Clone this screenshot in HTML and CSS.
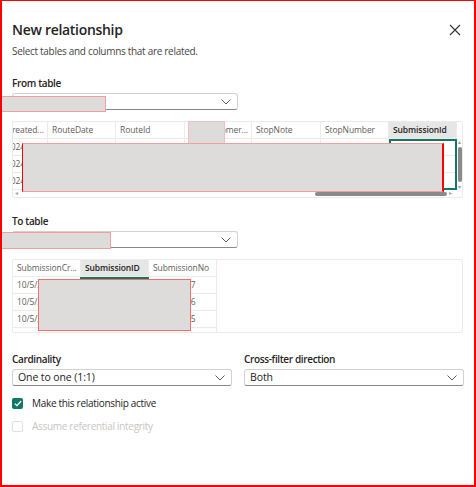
FILE: index.html
```html
<!DOCTYPE html>
<html>
<head>
<meta charset="utf-8">
<link rel="stylesheet" href="styles.css">
</head>
<body>
<div class="frame">
  <header class="head">
    <h1 class="title">New relationship</h1>
    <button class="close" aria-label="Close">
      <svg width="12" height="12" viewBox="0 0 12 12"><path d="M1 1L11 11M11 1L1 11" stroke="#323130" stroke-width="1.1" fill="none"/></svg>
    </button>
  </header>
  <p class="subtitle">Select tables and columns that are related.</p>

  <section class="block">
    <div class="label">From table</div>
    <div class="select half">
      <span class="value"></span>
      <svg class="chev" width="10" height="6" viewBox="0 0 10 6"><path d="M0.5 0.5L5 5L9.5 0.5" stroke="#605e5c" fill="none"/></svg>
      <div class="redact r-from-select"></div>
    </div>
    <div class="grid from-grid">
      <div class="grid-main">
        <div class="row head-row">
          <div class="cell c35 first">reated...</div>
          <div class="cell c68">RouteDate</div>
          <div class="cell c69">RouteId</div>
          <div class="cell c67 right">Customer...</div>
          <div class="cell c69">StopNote</div>
          <div class="cell c68">StopNumber</div>
          <div class="cell c68 sel-head">SubmissionId</div>
        </div>
        <div class="body">
          <div class="row"><div class="cell c35 first date">2024</div><div class="cell c68"></div><div class="cell c69"></div><div class="cell c67"></div><div class="cell c69"></div><div class="cell c68"></div><div class="cell c68"></div></div>
          <div class="row"><div class="cell c35 first date">2024</div><div class="cell c68"></div><div class="cell c69"></div><div class="cell c67"></div><div class="cell c69"></div><div class="cell c68"></div><div class="cell c68"></div></div>
          <div class="row"><div class="cell c35 first date">2024</div><div class="cell c68"></div><div class="cell c69"></div><div class="cell c67"></div><div class="cell c69"></div><div class="cell c68"></div><div class="cell c68"></div></div>
          <div class="sel-col from-sel"></div>
        </div>
        <div class="hscroll">
          <span class="arr">&#9666;</span>
          <div class="hthumb"></div>
          <span class="arr">&#9656;</span>
        </div>
      </div>
      <div class="vscroll">
        <span class="varr">&#9652;</span>
        <div class="vthumb"></div>
        <span class="varr">&#9662;</span>
      </div>
      <div class="redact r-from-head"></div>
      <div class="redact r-from-body"></div>
    </div>
  </section>

  <section class="block">
    <div class="label">To table</div>
    <div class="select half">
      <span class="value"></span>
      <svg class="chev" width="10" height="6" viewBox="0 0 10 6"><path d="M0.5 0.5L5 5L9.5 0.5" stroke="#605e5c" fill="none"/></svg>
      <div class="redact r-to-select"></div>
    </div>
    <div class="grid to-grid">
      <div class="grid-main">
        <div class="row head-row">
          <div class="cell c68">SubmissionCr...</div>
          <div class="cell c68 sel-head">SubmissionID</div>
          <div class="cell c68">SubmissionNo</div>
        </div>
        <div class="body">
          <div class="row"><div class="cell c68">10/5/2024</div><div class="cell c68"></div><div class="cell c68 num">27</div></div>
          <div class="row"><div class="cell c68">10/5/2024</div><div class="cell c68"></div><div class="cell c68 num">26</div></div>
          <div class="row"><div class="cell c68">10/5/2024</div><div class="cell c68"></div><div class="cell c68 num">25</div></div>
          <div class="sel-col to-sel"></div>
        </div>
      </div>
      <div class="redact r-to-body"></div>
    </div>
  </section>

  <section class="pair">
    <div class="field">
      <div class="label">Cardinality</div>
      <div class="select">
        <span class="value">One to one (1:1)</span>
        <svg class="chev" width="10" height="6" viewBox="0 0 10 6"><path d="M0.5 0.5L5 5L9.5 0.5" stroke="#605e5c" fill="none"/></svg>
      </div>
    </div>
    <div class="field">
      <div class="label">Cross-filter direction</div>
      <div class="select">
        <span class="value">Both</span>
        <svg class="chev" width="10" height="6" viewBox="0 0 10 6"><path d="M0.5 0.5L5 5L9.5 0.5" stroke="#605e5c" fill="none"/></svg>
      </div>
    </div>
  </section>

  <div class="check on">
    <span class="box"><svg width="8" height="7" viewBox="0 0 8 7"><path d="M0.8 3.6L2.9 5.6L7.2 1" stroke="#fff" stroke-width="1.3" fill="none"/></svg></span>
    <span class="ctext">Make this relationship active</span>
  </div>
  <div class="check off">
    <span class="box"></span>
    <span class="ctext">Assume referential integrity</span>
  </div>
</div>
</body>
</html>
```

FILE: styles.css
```css
* { box-sizing: border-box; }
html, body { margin: 0; padding: 0; background: #fff; }
body {
  font-family: "Open Sans", "Noto Sans", sans-serif;
  color: #252423;
}
.frame {
  width: 476px;
  height: 487px;
  border: 1px solid #ff0000;
  border-left-width: 2px;
  border-right-width: 2px;
  border-bottom-width: 2px;
  padding: 0 10px 0 10px;
  overflow: hidden;
}
.head {
  display: flex;
  align-items: center;
  justify-content: space-between;
  margin-top: 18px;
  height: 22px;
}
.title {
  margin: 0;
  font-size: 14px;
  font-weight: 600;
  line-height: 22px;
  letter-spacing: -0.3px;
}
.close {
  border: 0;
  background: none;
  padding: 0;
  margin-right: 3px;
  width: 12px;
  height: 12px;
  display: flex;
}
.subtitle {
  margin: 2px 0 0 0;
  font-size: 10px;
  line-height: 16px;
  letter-spacing: -0.3px;
  color: #484644;
}
.block { margin-top: 16px; }
.block + .block { margin-top: 15px; }
.label {
  font-size: 10px;
  font-weight: 600;
  line-height: 16px;
  letter-spacing: -0.35px;
}
.select {
  position: relative;
  margin-top: 2px;
  height: 17px;
  border: 1px solid #d1d1d1;
  border-bottom-color: #8a8886;
  border-radius: 3px;
  display: flex;
  align-items: center;
  justify-content: space-between;
  padding: 0 6px 0 5px;
  font-size: 10.5px;
  letter-spacing: -0.1px;
  color: #252423;
}
.select.half { width: 226px; }
.value { line-height: 15px; }
.chev { display: block; }

.grid {
  position: relative;
  margin-top: 11px;
  width: 451px;
  border: 1px solid #edebe9;
  border-radius: 2px;
  display: flex;
  font-size: 8.5px;
  letter-spacing: -0.1px;
  color: #605e5c;
}
.grid-main { flex: 1; min-width: 0; overflow: hidden; }
.row { display: flex; height: 17px; border-bottom: 1px solid #edebe9; }
.body { position: relative; }
.cell {
  flex: none;
  border-right: 1px solid #edebe9;
  padding: 0 4px;
  line-height: 16px;
  white-space: nowrap;
  overflow: hidden;
}
.cell.first { padding: 0; text-indent: -1px; }
.cell.date { text-indent: -7px; }
.cell.right { text-align: right; padding-right: 3px; }
.head-row .cell { color: #605e5c; }
.c35 { width: 35px; }
.c67 { width: 67px; }
.c68 { width: 68px; }
.c69 { width: 69px; }
.sel-head { background: #e6e6e6; color: #252423 !important; font-weight: 600; }
.sel-col {
  position: absolute;
  top: 0;
  bottom: 0;
  border: 2px solid #117865;
}
.from-sel { left: 376px; width: 68px; }
.to-sel { left: 67px; width: 69px; }

.hscroll {
  height: 7px;
  display: flex;
  align-items: center;
  font-size: 6px;
  color: #a0a0a0;
  padding: 0 2px;
}
.hthumb {
  margin-left: 297px;
  width: 132px;
  height: 4px;
  background: #8a8a8a;
  border-radius: 2px;
}
.hscroll .arr { line-height: 7px; }
.hscroll .arr:last-child { margin-left: 2px; }
.vscroll {
  width: 5px;
  margin-top: 17px;
  margin-bottom: 7px;
  display: flex;
  flex-direction: column;
  align-items: center;
  font-size: 6px;
  color: #a0a0a0;
  line-height: 6px;
}
.vthumb {
  flex: 1;
  width: 4px;
  margin: 2px 0;
  background: #8a8a8a;
  border-radius: 2px;
}
.to-grid { height: 74px; }
.to-grid .grid-main { flex: none; width: 204px; border-right: 1px solid #edebe9; }
.num { padding-left: 37px; }

.redact {
  position: absolute;
  background: #dedcdb;
  border: 1px solid #f0a0a0;
}
.r-from-select { left: -12px; top: 2px; width: 105px; height: 16px; }
.r-to-select { left: -12px; top: 0px; width: 110px; height: 17px; }
.r-from-head { left: 175px; top: -1px; width: 37px; height: 23px; border-color: #f0c0c0; }
.r-from-body { left: 9px; top: 21px; width: 422px; height: 49px; border-left-color: #ff0000; border-right: 2px solid #ff0000; }
.r-to-body { left: 25px; top: 19px; width: 153px; height: 52px; border-color: #f07070; }

.pair {
  margin-top: 18px;
  display: flex;
  gap: 12px;
}
.field { flex: 1; }
.check {
  display: flex;
  align-items: center;
  gap: 9px;
  height: 16px;
  font-size: 10px;
  letter-spacing: -0.3px;
}
.check.on { margin-top: 9px; }
.check.off { margin-top: 7px; color: #c8c6c4; }
.box {
  width: 11px;
  height: 11px;
  border-radius: 2px;
  display: flex;
  align-items: center;
  justify-content: center;
}
.on .box { background: #117865; }
.off .box { border: 1px solid #e1dfdd; }
```
